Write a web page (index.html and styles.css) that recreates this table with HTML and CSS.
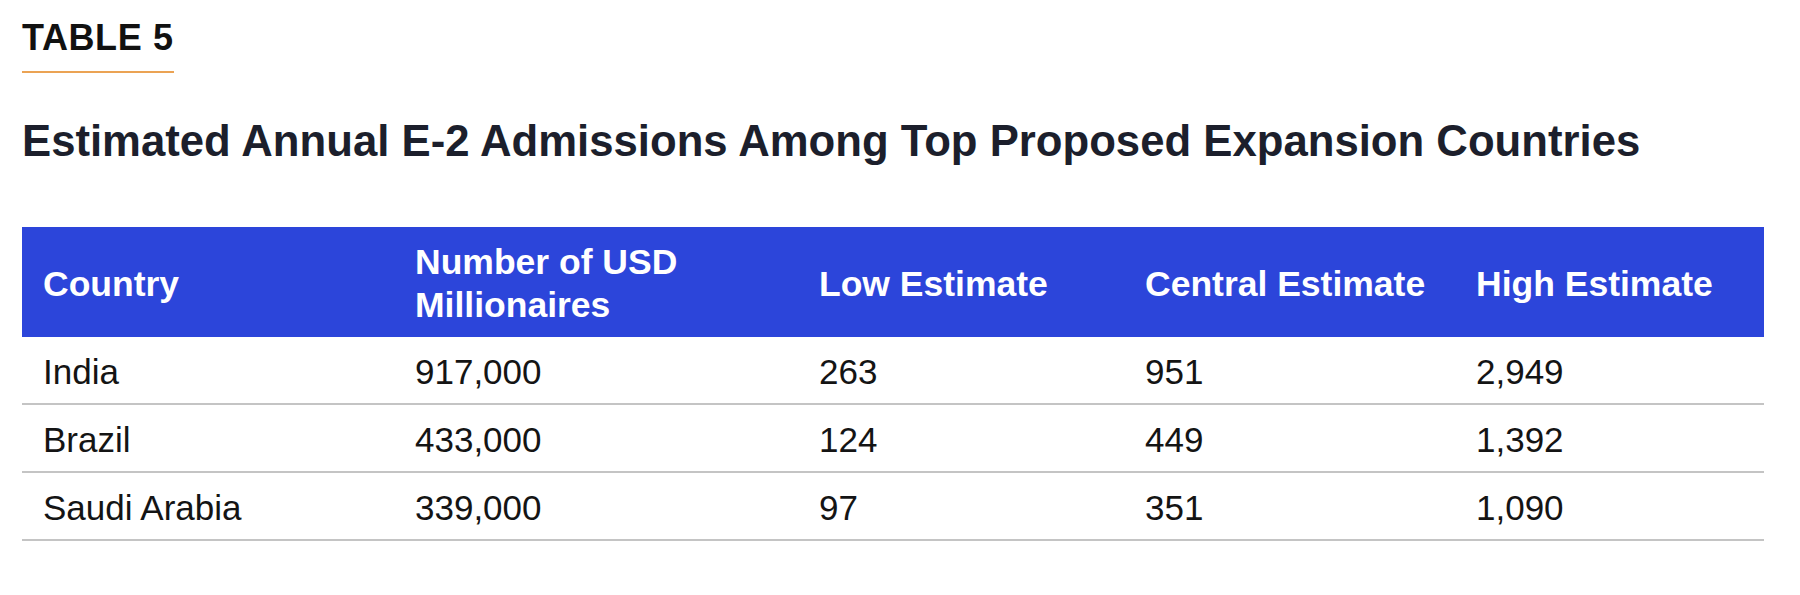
FILE: index.html
```html
<!DOCTYPE html>
<html lang="en">
<head>
<meta charset="utf-8">
<title>Table 5</title>
<link rel="stylesheet" href="styles.css">
</head>
<body>
<div class="wrap">
  <div class="label">TABLE 5</div>
  <h2 class="title">Estimated Annual E-2 Admissions Among Top Proposed Expansion Countries</h2>
  <table class="data">
    <colgroup>
      <col class="c1"><col class="c2"><col class="c3"><col class="c4"><col class="c5">
    </colgroup>
    <thead>
      <tr>
        <th>Country</th>
        <th>Number of USD<br>Millionaires</th>
        <th>Low Estimate</th>
        <th>Central Estimate</th>
        <th>High Estimate</th>
      </tr>
    </thead>
    <tbody>
      <tr><td>India</td><td>917,000</td><td>263</td><td>951</td><td>2,949</td></tr>
      <tr><td>Brazil</td><td>433,000</td><td>124</td><td>449</td><td>1,392</td></tr>
      <tr><td>Saudi Arabia</td><td>339,000</td><td>97</td><td>351</td><td>1,090</td></tr>
    </tbody>
  </table>
</div>
</body>
</html>
```

FILE: styles.css
```css
html, body {
  margin: 0;
  padding: 0;
  background: #ffffff;
}

.wrap {
  padding: 0 22px;
  font-family: "Liberation Sans", Arial, sans-serif;
}

.label {
  display: inline-block;
  margin-top: 20px;
  font-size: 36px;
  line-height: 36px;
  font-weight: 700;
  letter-spacing: 0.6px;
  color: #111111;
  padding-bottom: 15px;
  border-bottom: 2px solid #eba354;
}

.title {
  margin: 43px 0 0 0;
  font-size: 43.7px;
  line-height: 50px;
  font-weight: 700;
  color: #1c1f2c;
}

.data {
  margin-top: 61px;
  width: 1742px;
  border-collapse: collapse;
  table-layout: fixed;
}

.c1 { width: 372px; }
.c2 { width: 404px; }
.c3 { width: 326px; }
.c4 { width: 331px; }
.c5 { width: 309px; }

.data th {
  background: #2c45da;
  color: #ffffff;
  font-size: 35.5px;
  line-height: 43px;
  font-weight: 700;
  text-align: left;
  vertical-align: middle;
  height: 110px;
  padding: 4px 21px 0 21px;
  box-sizing: border-box;
}

.data td {
  font-size: 35px;
  line-height: 41px;
  color: #141414;
  padding: 14px 21px 11px 21px;
  border-bottom: 2px solid #c4c4c4;
  vertical-align: top;
}
```
